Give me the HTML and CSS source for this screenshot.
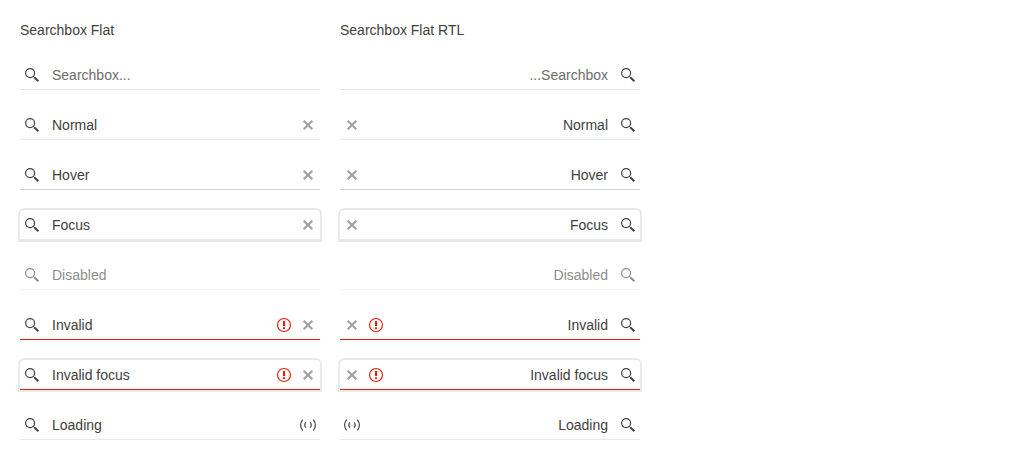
FILE: index.html
```html
<!DOCTYPE html>
<html lang="en">
<head>
<meta charset="utf-8">
<title>Searchbox Flat</title>
<link rel="stylesheet" href="styles.css">
</head>
<body>
<svg class="sprite" aria-hidden="true">
  <symbol id="search" viewBox="0 0 16 16">
    <circle cx="6.1" cy="6.1" r="4.5" fill="none" stroke="currentColor" stroke-width="1.2"/>
    <path d="M9.3 9.3l1.5 1.5" stroke="currentColor" stroke-width="1"/>
    <path d="M10.2 10.2l4.2 4.1" stroke="currentColor" stroke-width="1.9"/>
  </symbol>
  <symbol id="clear" viewBox="0 0 16 16">
    <path d="M3.7 3.7l8.6 8.6M12.3 3.7l-8.6 8.6" stroke="currentColor" stroke-width="2.1"/>
  </symbol>
  <symbol id="alert" viewBox="0 0 16 16">
    <circle cx="8" cy="8" r="6.5" fill="none" stroke="currentColor" stroke-width="1.15"/>
    <path d="M7 4h2.1v5H7zM7 10.2h2.1v1.9H7z" fill="currentColor"/>
  </symbol>
  <symbol id="loading" viewBox="0 0 16 16">
    <path d="M2.7 2.6Q-1.5 8 2.7 13.4M13.3 2.6Q17.5 8 13.3 13.4M5.9 5.4Q3.6 8 5.9 10.6M10.1 5.4Q12.4 8 10.1 10.6" fill="none" stroke="currentColor" stroke-width="1.15"/>
  </symbol>
</svg>
<main class="page">
  <section class="column">
    <h1 class="title">Searchbox Flat</h1>
    <div class="box"><svg class="icon"><use href="#search"/></svg><span class="text placeholder">Searchbox...</span></div>
    <div class="box"><svg class="icon"><use href="#search"/></svg><span class="text">Normal</span><svg class="icon clear"><use href="#clear"/></svg></div>
    <div class="box hover"><svg class="icon"><use href="#search"/></svg><span class="text">Hover</span><svg class="icon clear"><use href="#clear"/></svg></div>
    <div class="box focus"><svg class="icon"><use href="#search"/></svg><span class="text">Focus</span><svg class="icon clear"><use href="#clear"/></svg></div>
    <div class="box disabled"><svg class="icon"><use href="#search"/></svg><span class="text">Disabled</span></div>
    <div class="box invalid"><svg class="icon"><use href="#search"/></svg><span class="text">Invalid</span><svg class="icon alert"><use href="#alert"/></svg><svg class="icon clear"><use href="#clear"/></svg></div>
    <div class="box invalid focus"><svg class="icon"><use href="#search"/></svg><span class="text">Invalid focus</span><svg class="icon alert"><use href="#alert"/></svg><svg class="icon clear"><use href="#clear"/></svg></div>
    <div class="box"><svg class="icon"><use href="#search"/></svg><span class="text">Loading</span><svg class="icon"><use href="#loading"/></svg></div>
  </section>
  <section class="column">
    <h1 class="title">Searchbox Flat RTL</h1>
    <div class="box" dir="rtl"><svg class="icon"><use href="#search"/></svg><span class="text placeholder">Searchbox...</span></div>
    <div class="box" dir="rtl"><svg class="icon"><use href="#search"/></svg><span class="text">Normal</span><svg class="icon clear"><use href="#clear"/></svg></div>
    <div class="box hover" dir="rtl"><svg class="icon"><use href="#search"/></svg><span class="text">Hover</span><svg class="icon clear"><use href="#clear"/></svg></div>
    <div class="box focus" dir="rtl"><svg class="icon"><use href="#search"/></svg><span class="text">Focus</span><svg class="icon clear"><use href="#clear"/></svg></div>
    <div class="box disabled" dir="rtl"><svg class="icon"><use href="#search"/></svg><span class="text">Disabled</span></div>
    <div class="box invalid" dir="rtl"><svg class="icon"><use href="#search"/></svg><span class="text">Invalid</span><svg class="icon alert"><use href="#alert"/></svg><svg class="icon clear"><use href="#clear"/></svg></div>
    <div class="box invalid focus" dir="rtl"><svg class="icon"><use href="#search"/></svg><span class="text">Invalid focus</span><svg class="icon alert"><use href="#alert"/></svg><svg class="icon clear"><use href="#clear"/></svg></div>
    <div class="box" dir="rtl"><svg class="icon"><use href="#search"/></svg><span class="text">Loading</span><svg class="icon"><use href="#loading"/></svg></div>
  </section>
</main>
</body>
</html>
```
FILE: styles.css
```css
* {
  box-sizing: border-box;
}

body {
  margin: 0;
  background: #fff;
  color: #404040;
  font: 14px/20px "Liberation Sans", Arial, sans-serif;
}

.sprite {
  display: none;
}

.page {
  display: flex;
  gap: 20px;
  padding: 20px;
}

.column {
  display: flex;
  flex-direction: column;
  gap: 20px;
  width: 300px;
}

.title {
  margin: 0;
  font-size: 14px;
  font-weight: 400;
  line-height: 20px;
}

.box {
  display: flex;
  align-items: center;
  gap: 8px;
  height: 30px;
  padding: 1px 4px 0;
  border-bottom: 1px solid #e9e9e9;
}

.icon {
  flex: none;
  width: 16px;
  height: 16px;
}

.text {
  flex: 1;
  padding: 0 4px;
}

.placeholder {
  color: #6c6c6c;
}

.clear {
  color: #a0a0a0;
}

.alert {
  color: #ee1c06;
}

.hover {
  border-bottom-color: #d0d0d0;
}

.focus {
  border-bottom-color: #e9e9e9;
  border-radius: 4px 4px 0 0;
  box-shadow: 0 0 0 2px #e9e9e9;
}

.disabled {
  opacity: 0.6;
}

.invalid {
  border-bottom-color: #e01f0c;
}
```
